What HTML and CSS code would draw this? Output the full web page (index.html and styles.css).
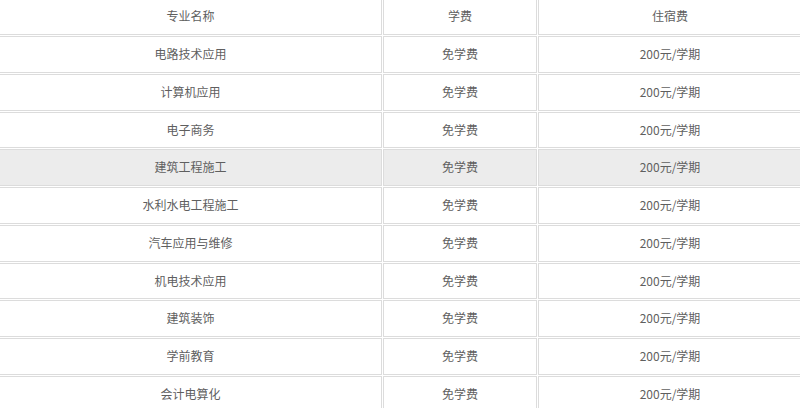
FILE: index.html
```html
<!DOCTYPE html>
<html lang="zh-CN">
<head>
<meta charset="utf-8">
<title>专业收费</title>
<link rel="stylesheet" href="styles.css">
</head>
<body>
<div class="wrap">
<table class="fees">
<thead>
<tr><th class="c1">专业名称</th><th class="c2">学费</th><th class="c3">住宿费</th></tr>
</thead>
<tbody>
<tr><td>电路技术应用</td><td>免学费</td><td>200元/学期</td></tr>
<tr><td>计算机应用</td><td>免学费</td><td>200元/学期</td></tr>
<tr><td>电子商务</td><td>免学费</td><td>200元/学期</td></tr>
<tr class="hl"><td>建筑工程施工</td><td>免学费</td><td>200元/学期</td></tr>
<tr><td>水利水电工程施工</td><td>免学费</td><td>200元/学期</td></tr>
<tr><td>汽车应用与维修</td><td>免学费</td><td>200元/学期</td></tr>
<tr><td>机电技术应用</td><td>免学费</td><td>200元/学期</td></tr>
<tr><td>建筑装饰</td><td>免学费</td><td>200元/学期</td></tr>
<tr><td>学前教育</td><td>免学费</td><td>200元/学期</td></tr>
<tr><td>会计电算化</td><td>免学费</td><td>200元/学期</td></tr>
</tbody>
</table>
</div>
</body>
</html>
```

FILE: styles.css
```css
html, body {
  margin: 0;
  padding: 0;
  background: #fff;
}
.wrap {
  width: 800px;
  height: 408px;
  overflow: hidden;
}
.fees {
  margin: -2.75px 0 0 -2px;
  border-collapse: separate;
  border-spacing: 1px;
  table-layout: fixed;
  width: 805px;
  font-family: "Noto Sans CJK SC", "Microsoft YaHei", sans-serif;
  font-size: 12px;
  color: #5f5f5f;
}
.fees th,
.fees td {
  box-sizing: border-box;
  border: 1px solid #dcdcdc;
  padding: 0 0 1px;
  height: 36.75px;
  line-height: 33.75px;
  text-align: center;
  font-weight: normal;
  white-space: nowrap;
}
.fees .c1 { width: 383px; }
.fees .c2 { width: 154px; }
.fees .c3 { width: 264px; }
.fees tr.hl td {
  background: #ececec;
}
```
